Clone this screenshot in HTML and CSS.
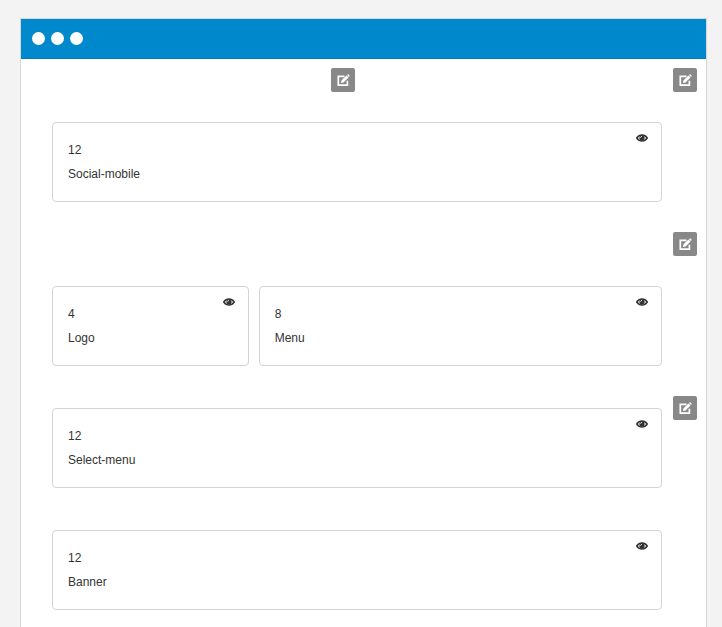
FILE: index.html
```html
<!DOCTYPE html>
<html lang="en">
<head>
<meta charset="utf-8">
<meta name="viewport" content="width=device-width, initial-scale=1">
<title>Layout</title>
<link rel="stylesheet" href="styles.css">
</head>
<body>
<svg class="sprite" aria-hidden="true">
  <symbol id="edit" viewBox="0 0 14 14">
    <path d="M8.500 3.300H2.300v8.900h9.100V7.800" fill="none" stroke="currentColor" stroke-width="1.700"/>
    <path d="M4.900 10l.6-2.700 5-4.800 2 2-5 4.900zM11 2l.6-.6q.4-.4.900 0l1 1q.4.500 0 .9l-.6.600z" fill="currentColor"/>
  </symbol>
  <symbol id="eye" viewBox="0 0 12 8">
    <path d="M.7 4Q2.800 1 6 1T11.300 4Q9.200 7 6 7T.7 4z" fill="none" stroke="currentColor" stroke-width="1.400"/>
    <circle cx="6" cy="3.900" r="2.600" fill="currentColor"/>
    <path d="M4.600 3.700Q4.700 2.500 5.900 2.400" fill="none" stroke="#fff" stroke-width=".9"/>
  </symbol>
</svg>
<main class="window">
  <header class="titlebar"><span class="dot"></span><span class="dot"></span><span class="dot"></span></header>
  <div class="canvas">
    <section class="section">
      <div class="content">
        <div class="tools"><button class="edit" type="button" aria-label="Edit column"><svg><use href="#edit"/></svg></button></div>
        <div class="row">
          <article class="card"><p>12</p><p>Social-mobile</p><button class="eye" type="button" aria-label="Visibility"><svg><use href="#eye"/></svg></button></article>
        </div>
      </div>
      <button class="edit" type="button" aria-label="Edit row"><svg><use href="#edit"/></svg></button>
    </section>
    <section class="section">
      <div class="content">
        <div class="tools"></div>
        <div class="row">
          <article class="card third"><p>4</p><p>Logo</p><button class="eye" type="button" aria-label="Visibility"><svg><use href="#eye"/></svg></button></article>
          <article class="card two-thirds"><p>8</p><p>Menu</p><button class="eye" type="button" aria-label="Visibility"><svg><use href="#eye"/></svg></button></article>
        </div>
      </div>
      <button class="edit" type="button" aria-label="Edit row"><svg><use href="#edit"/></svg></button>
    </section>
    <section class="section">
      <div class="content stacked">
        <div class="row">
          <article class="card"><p>12</p><p>Select-menu</p><button class="eye" type="button" aria-label="Visibility"><svg><use href="#eye"/></svg></button></article>
          <article class="card"><p>12</p><p>Banner</p><button class="eye" type="button" aria-label="Visibility"><svg><use href="#eye"/></svg></button></article>
        </div>
      </div>
      <button class="edit" type="button" aria-label="Edit row"><svg><use href="#edit"/></svg></button>
    </section>
  </div>
</main>
</body>
</html>
```
FILE: styles.css
```css
* { box-sizing: border-box; }

body {
  margin: 0;
  padding: 18px 15px 0 20px;
  min-height: 100vh;
  display: flex;
  background: #f3f3f3;
  color: #333;
  font: 12px/24px "Liberation Sans", Arial, sans-serif;
}

.sprite {
  position: absolute;
  width: 0;
  height: 0;
}

.window {
  flex: 1;
  min-width: 0;
  background: #fff;
  border: 1px solid #d6d6d6;
  border-bottom: 0;
}

.titlebar {
  display: flex;
  align-items: center;
  gap: 6px;
  height: 40px;
  padding: 0 11px;
  background: #0088cc;
  border-bottom: 1px solid #007ebd;
}

.dot {
  width: 13px;
  height: 13px;
  border-radius: 50%;
  background: #fff;
}

.canvas {
  display: flex;
  flex-direction: column;
  gap: 30px;
  padding: 9px 9px 16px 31px;
}

.section {
  display: flex;
  align-items: flex-start;
  gap: 11px;
}

.content {
  flex: 1;
  min-width: 0;
}

.stacked { padding-top: 12px; }

.tools {
  display: flex;
  justify-content: center;
  height: 24px;
  margin-bottom: 30px;
  padding-right: 28px;
}

.row {
  display: grid;
  grid-template-columns: repeat(12, 1fr);
  gap: 42px 10px;
}

.card {
  position: relative;
  grid-column: span 12;
  padding: 15px;
  border: 1px solid #d3d3d3;
  border-radius: 4px;
}

.third { grid-column: span 4; }
.two-thirds { grid-column: span 8; }

p { margin: 0; }

button {
  display: block;
  margin: 0;
  padding: 0;
  border: 0;
  background: none;
  color: #333;
  cursor: pointer;
}

button svg { display: block; }

.edit {
  flex: none;
  width: 24px;
  height: 24px;
  padding: 5px;
  border-radius: 2px;
  background: #888;
  color: #fff;
}

.edit svg {
  width: 14px;
  height: 14px;
}

.eye {
  position: absolute;
  top: 11px;
  right: 13px;
}

.eye svg {
  width: 12px;
  height: 8px;
}
```
